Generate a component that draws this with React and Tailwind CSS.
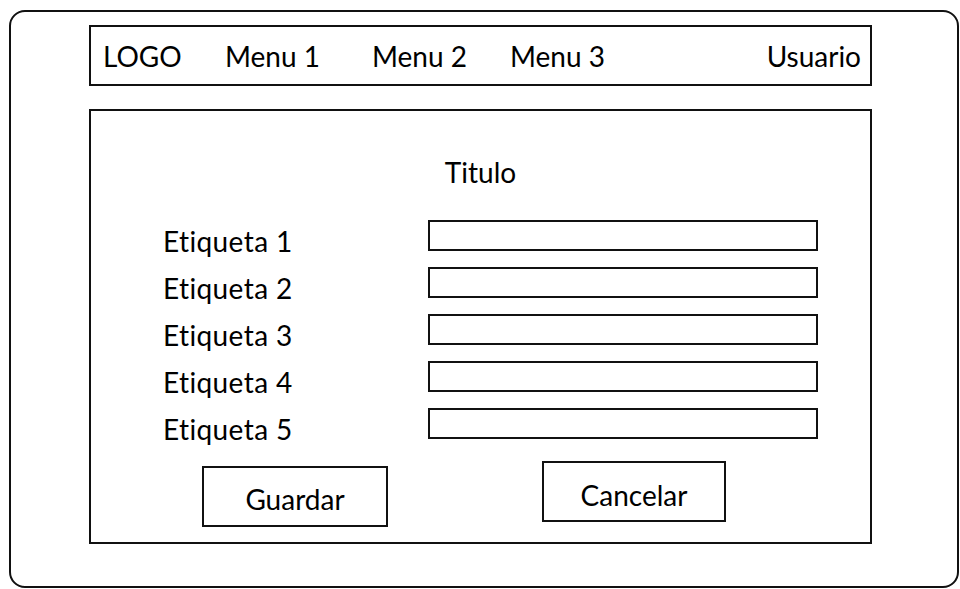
import React from "react";

const LABELS = ["Etiqueta 1", "Etiqueta 2", "Etiqueta 3", "Etiqueta 4", "Etiqueta 5"];

// fila del formulario: etiqueta + campo
function FieldRow({ label }) {
  return (
    <div className="flex items-start h-[31px]">
      <div className="w-[265px] mt-[7px] leading-[28px] tracking-[0.4px]">{label}</div>
      <div className="w-[390px] h-[31px] border-2 border-[#111]"></div>
    </div>
  );
}

export default function App() {
  return (
    <div
      className="w-[960px] h-[589px] bg-white text-[28px] text-black pt-[10px] pl-[9px] [font-variant-ligatures:none]"
      style={{ fontFamily: "Lato, 'Liberation Sans', sans-serif" }}
    >
      <div className="w-[950px] h-[578px] border-2 border-[#111] rounded-[16px] pt-[13px] pl-[78px]">
        {/* Barra de menu */}
        <div className="w-[783px] h-[61px] border-2 border-[#111] flex items-center pl-[12px] pr-[9px] leading-[28px]">
          <div className="w-[122px]">LOGO</div>
          <div className="w-[147px]">Menu 1</div>
          <div className="w-[138px]">Menu 2</div>
          <div>Menu 3</div>
          <div className="ml-auto">Usuario</div>
        </div>

        {/* Formulario */}
        <div className="mt-[23px] w-[783px] h-[435px] border-2 border-[#111] flex flex-col pl-[72px]">
          <div className="mt-[47px] -ml-[72px] w-[779px] leading-[28px] text-center">Titulo</div>
          <div className="mt-[34px] flex flex-col gap-[16px]">
            {LABELS.map((l) => (
              <FieldRow key={l} label={l} />
            ))}
          </div>
          <div className="mt-[22px] flex items-start">
            <div className="ml-[39px] mt-[5px] w-[186px] h-[61px] border-2 border-[#111] pt-[17px] leading-[28px] text-center">
              Guardar
            </div>
            <div className="ml-[154px] w-[184px] h-[61px] border-2 border-[#111] pt-[18px] leading-[28px] text-center">
              Cancelar
            </div>
          </div>
        </div>
      </div>
    </div>
  );
}
